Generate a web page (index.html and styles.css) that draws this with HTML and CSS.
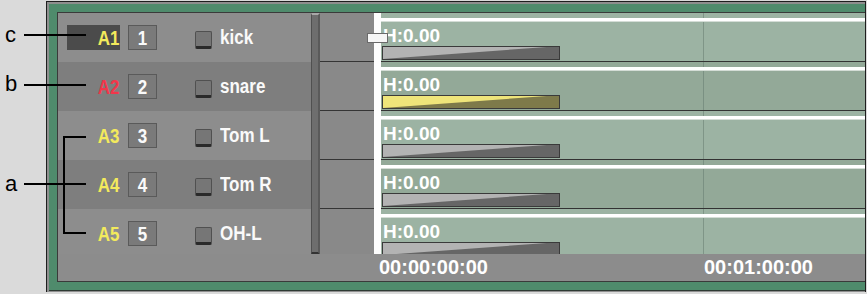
FILE: index.html
```html
<!DOCTYPE html>
<html lang="en">
<head>
  <meta charset="UTF-8">
  <title>Timeline Tracks</title>
  <link rel="stylesheet" href="styles.css">
</head>
<body>
  <div class="frame">
    <div class="bezel">
      <div class="panel">
        <div class="upper">
          <div class="heads">
            <div class="thead sel">
              <span class="tlabel"><span class="cx">A1</span></span>
              <span class="tnum"><span class="cx">1</span></span>
              <span class="solo"></span>
              <span class="tname cx">kick</span>
            </div>
            <div class="thead">
              <span class="tlabel red"><span class="cx">A2</span></span>
              <span class="tnum"><span class="cx">2</span></span>
              <span class="solo"></span>
              <span class="tname cx">snare</span>
            </div>
            <div class="thead">
              <span class="tlabel"><span class="cx">A3</span></span>
              <span class="tnum"><span class="cx">3</span></span>
              <span class="solo"></span>
              <span class="tname cx">Tom L</span>
            </div>
            <div class="thead">
              <span class="tlabel"><span class="cx">A4</span></span>
              <span class="tnum"><span class="cx">4</span></span>
              <span class="solo"></span>
              <span class="tname cx">Tom R</span>
            </div>
            <div class="thead">
              <span class="tlabel"><span class="cx">A5</span></span>
              <span class="tnum"><span class="cx">5</span></span>
              <span class="solo"></span>
              <span class="tname cx">OH-L</span>
            </div>
          </div>

          <div class="vscroll"></div>

          <div class="tracks">
            <div class="gapcol">
              <div class="gap"></div>
              <div class="gap"></div>
              <div class="gap"></div>
              <div class="gap"></div>
              <div class="gap"></div>
            </div>
            <div class="playhead"></div>
            <div class="lanes">
              <div class="lane">
                <div class="lane-line"></div>
                <div class="lane-label">H:0.00</div>
                <div class="meter"></div>
              </div>
              <div class="lane">
                <div class="lane-line"></div>
                <div class="lane-label">H:0.00</div>
                <div class="meter armed"></div>
              </div>
              <div class="lane">
                <div class="lane-line"></div>
                <div class="lane-label">H:0.00</div>
                <div class="meter"></div>
              </div>
              <div class="lane">
                <div class="lane-line"></div>
                <div class="lane-label">H:0.00</div>
                <div class="meter"></div>
              </div>
              <div class="lane">
                <div class="lane-line"></div>
                <div class="lane-label">H:0.00</div>
                <div class="meter"></div>
              </div>
            </div>
            <div class="handle"></div>
          </div>
        </div>

        <div class="ruler">
          <span class="tc">00:00:00:00</span>
          <span class="tc">00:01:00:00</span>
        </div>
      </div>
    </div>
  </div>

  <!-- callouts -->
  <svg class="callouts" width="100" height="260" viewBox="0 0 100 260">
    <path d="M24 35 H86 M24 85 H86 M24 184 H86 M86 137 H64 V233 H86" fill="none" stroke="#000" stroke-width="2"/>
  </svg>
  <span class="mark mark-c">c</span>
  <span class="mark mark-b">b</span>
  <span class="mark mark-a">a</span>
</body>
</html>
```

FILE: styles.css
```css
* { margin: 0; padding: 0; box-sizing: border-box; }

body {
  background: #dadada;
  font-family: 'Liberation Sans', Arial, sans-serif;
  width: 867px; height: 294px; overflow: hidden;
  position: relative;
}

.frame {
  width: 820px; margin: 1px 0 0 46px;
  border: 1px solid #1e1e1e; border-bottom: none;
  padding: 2px 0 2px 2px;
  background: #8e8e8e;
}

.bezel {
  border: 8px solid #4f8b6c; border-right: none;
  box-shadow: 0 1px 0 #2e3a33;
}

.panel {
  border: 1px solid #3a3a3a; border-right: none;
  background: #8c8c8c;
  height: 270px; overflow: hidden;
}

.upper { display: flex; height: 241px; overflow: hidden; }

/* track headers */
.heads { width: 253px; }

.thead {
  height: 49px; display: flex; align-items: center; padding-left: 9px;
  background: #8d8d8d;
  font-weight: bold; font-size: 20px; color: #fafafa;
}
.thead:nth-child(even) { background: #7e7e7e; }

/* the UI font is tall and narrow */
.cx { display: inline-block; transform: scaleX(0.85); }

.tlabel {
  width: 53px; height: 25px; line-height: 26px; text-align: right;
  color: #f3ea5c;
}
.tlabel .cx { transform-origin: right center; }
.sel .tlabel { background: #4b4b4b; }
.tlabel.red { color: #f2364a; }

.tnum {
  margin-left: 8px; width: 29px; height: 25px; line-height: 24px;
  text-align: center;
  background: #7a7a7a; border: 1px solid #5a5a5a;
}

.solo {
  margin: 4px 0 0 38px; width: 17px; height: 18px;
  background: #767676;
  border: 1px solid #505050; border-bottom: 3px solid #2a2a2a;
  border-radius: 2px;
}

.tname { margin-left: 8px; transform-origin: left center; }

.vscroll {
  width: 9px; height: 242px;
  background: #6e6e6e;
  border-left: 1px solid #505050; border-right: 2px solid #5a5a5a;
  border-top: 2px solid #a8a8a8; border-bottom: 3px solid #333;
}

/* tracks */
.tracks { display: flex; position: relative; }

.gapcol { width: 54px; }
.gap {
  height: 49px; background: #898989;
  border-bottom: 1px solid #353535;
}

.playhead { width: 7px; background: #fdfdfd; }

.lanes { width: 484px; }

.lane {
  height: 49px; padding-top: 5px;
  border-bottom: 1px solid #333;
  background: linear-gradient(to right, transparent 322px, #7f9587 322px, #7f9587 323px, transparent 323px), #9cb3a3;
}
.lane:nth-child(even) {
  background: linear-gradient(to right, transparent 322px, #7a9082 322px, #7a9082 323px, transparent 323px), #93a998;
}

.lane-line {
  height: 4px; background: #fff;
  border-bottom: 1px solid #d4ddd6;
}

.lane-label {
  margin-top: 3px; height: 21px; line-height: 21px; padding-left: 2px;
  font-weight: bold; font-size: 19px; color: #fff;
}

.meter {
  position: relative; margin-left: 1px;
  width: 178px; height: 14px;
  background: #666;
  border: 1px solid #3a3a3a;
}
.meter::before {
  content: ""; position: absolute; inset: 0;
  background: #b3b3b3;
  clip-path: polygon(0 0, 93% 0, 0 100%);
}
.meter.armed { background: #7e7a4a; }
.meter.armed::before { background: #efe57a; }

.handle {
  position: absolute; left: 47px; top: 20px;
  width: 21px; height: 10px;
  background: #f6f6f6; border: 1px solid #6a6a6a;
}

/* ruler */
.ruler {
  display: flex; height: 29px; padding: 3px 0 0 321px;
}
.tc {
  flex: none; width: 325px; line-height: 20px;
  font-weight: bold; font-size: 20px; color: #fff;
}
.tc + .tc { width: auto; }

/* callouts */
.callouts { position: absolute; left: 0; top: 0; }

.mark {
  position: absolute; left: 5px;
  font-size: 22px; line-height: 22px; color: #000;
}
.mark-c { top: 24px; }
.mark-b { top: 73px; }
.mark-a { top: 173px; }
```
